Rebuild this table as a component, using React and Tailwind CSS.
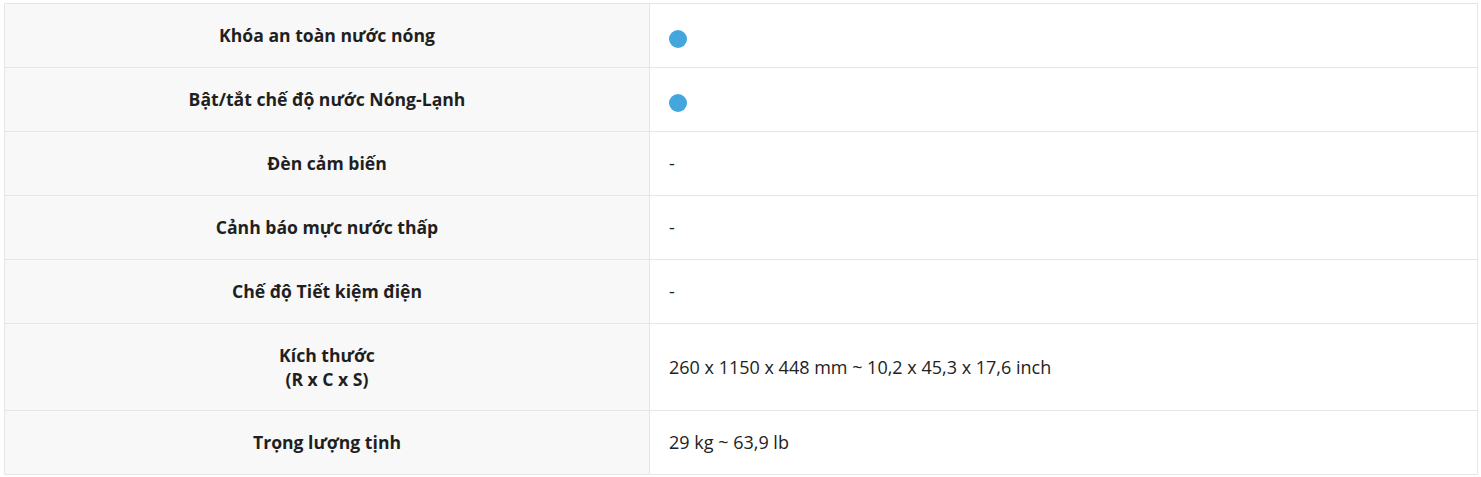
import React from "react";

const rows = [
  { label: "Khóa an toàn nước nóng", value: "dot" },
  { label: "Bật/tắt chế độ nước Nóng-Lạnh", value: "dot" },
  { label: "Đèn cảm biến", value: "-" },
  { label: "Cảnh báo mực nước thấp", value: "-" },
  { label: "Chế độ Tiết kiệm điện", value: "-" },
  { label: ["Kích thước", "(R x C x S)"], value: "260 x 1150 x 448 mm ~ 10,2 x 45,3 x 17,6 inch" },
  { label: "Trọng lượng tịnh", value: "29 kg ~ 63,9 lb" },
];

export default function App() {
  return (
    <div className="bg-white pt-[3px] pl-[4px] h-[477px]" style={{ fontFamily: '"Open Sans", "Noto Sans", sans-serif' }}>
      <table className="w-[1474px] border-collapse border border-[#e6e6e6] text-[18px] leading-6 text-[#222]">
        <tbody>
          {rows.map((r, i) => {
            const multi = Array.isArray(r.label);
            const pad = multi ? "pt-[19px] pb-[19px]" : "pt-[19px] pb-[20px]";
            return (
              <tr key={i} className="border-b border-[#e6e6e6]">
                <td className={`w-[645px] bg-[#f8f8f8] border-r border-[#e6e6e6] px-5 text-center font-bold text-[17.6px] text-[#1f1f1f] ${pad}`}>
                  {multi ? r.label.map((l, j) => <div key={j}>{l}</div>) : r.label}
                </td>
                <td className={`px-[19px] align-middle ${pad}`}>
                  {r.value === "dot" ? (
                    <span className="block mt-[5px] -mb-[2px] w-[18px] h-[18px] rounded-full bg-[#43a6dd]" />
                  ) : (
                    r.value
                  )}
                </td>
              </tr>
            );
          })}
        </tbody>
      </table>
    </div>
  );
}
